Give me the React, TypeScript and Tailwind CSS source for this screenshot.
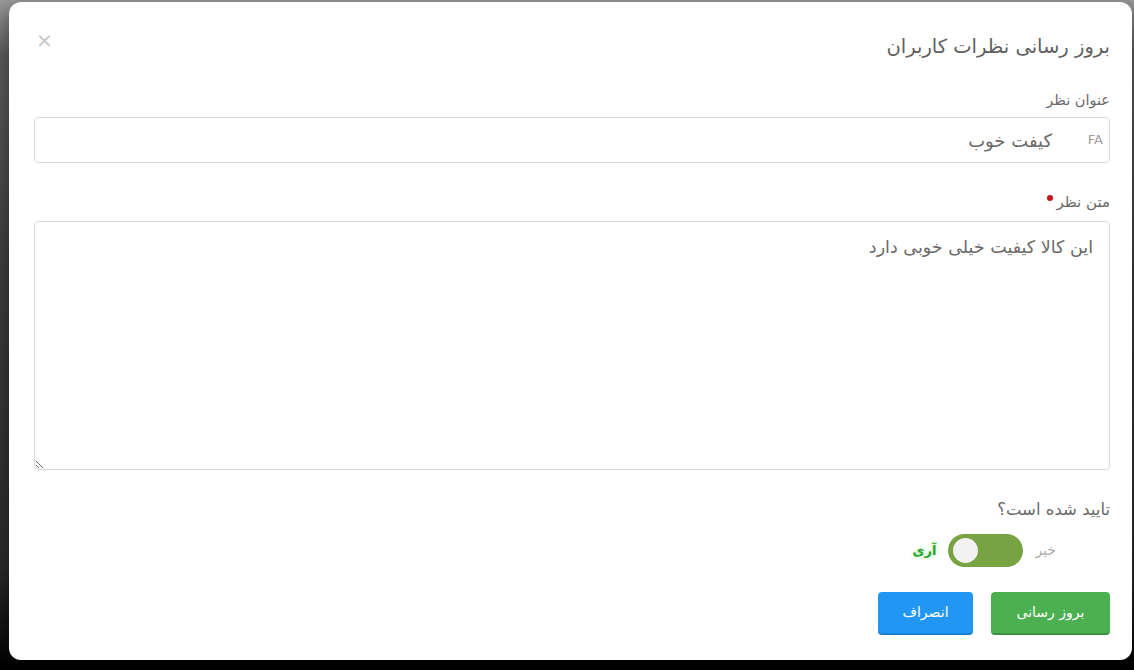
import React from "react";

export default function App() {
    return (
        <div className="w-[1134px] h-[670px] overflow-hidden bg-[linear-gradient(180deg,#9a9a9a_0%,#5a5a5a_8%,#3c3c3c_40%,#2a2a2a_85%,#000_100%)] pt-[2px] pl-[9px]" style={{ fontFamily: '"DejaVu Sans", "Noto Sans", sans-serif' }}>
            <div dir="rtl" className="w-[1123px] h-[658px] bg-white rounded-xl pt-[30px] pr-[22px] pl-[25px] flex flex-col shadow-[0_4px_16px_rgba(0,0,0,0.4)]">
                {/* header */}
                <div className="h-[30px] flex items-center justify-between">
                    <h4 className="text-[19.5px] leading-[30px] text-[#5f5f5f] font-normal">بروز رسانی نظرات کاربران</h4>
                    <button className="text-[#c4c4c4] text-[20px] leading-none -mt-[14px] ml-[2px]">×</button>
                </div>

                {/* title field */}
                <label className="mt-[26px] h-[24px] leading-[24px] text-[14.5px] text-[#6a6a6a]">عنوان نظر</label>
                <div className="mt-[5px] h-[46px] border border-[#d9d9d9] rounded flex items-center pr-[6px]">
                    <span className="text-[13px] text-[#a0a0a0] w-[51px]">FA</span>
                    <span className="text-[18px] text-[#6a6a6a]">کیفت خوب</span>
                </div>

                {/* body field */}
                <label className="mt-[27px] h-[24px] leading-[24px] text-[15px] text-[#6a6a6a]">
                    متن نظر
                    <span className="inline-block w-[6px] h-[6px] rounded-full bg-[#c8141e] mr-[3px] align-[6px]" />
                </label>
                <textarea
                    readOnly
                    defaultValue="این کالا کیفیت خیلی خوبی دارد"
                    className="mt-[7px] h-[249px] border border-[#d9d9d9] rounded pt-[12px] pr-[16px] text-[17.5px] text-[#6a6a6a] outline-none resize"
                    style={{ fontFamily: '"DejaVu Sans", "Noto Sans", sans-serif' }}
                />

                {/* approved switch */}
                <label className="mt-[28px] h-[24px] leading-[24px] text-[16.5px] text-[#6a6a6a]">تایید شده است؟</label>
                <div className="mt-[12px] flex items-center pr-[54px]">
                    <span className="text-[14px] text-[#aaa]">خیر</span>
                    <div className="mr-[12px] w-[75px] h-[33px] rounded-full bg-[#77a343] flex items-center justify-end pl-[5px]">
                        <div className="w-[25px] h-[25px] rounded-full bg-[#f2f2f2]" />
                    </div>
                    <span className="mr-[12px] text-[13px] font-bold text-[#2aa52a] [text-shadow:0_0_4px_#9be89b]">آری</span>
                </div>

                {/* actions */}
                <div className="mt-[25px] flex gap-[18px]">
                    <button className="w-[119px] h-[43px] rounded bg-[#4caf50] border-b-2 border-[#3e9142] text-white text-[14px]">بروز رسانی</button>
                    <button className="w-[95px] h-[43px] rounded bg-[#2196f3] border-b-2 border-[#1b7fcf] text-white text-[14px]">انصراف</button>
                </div>
            </div>
        </div>
    );
}
